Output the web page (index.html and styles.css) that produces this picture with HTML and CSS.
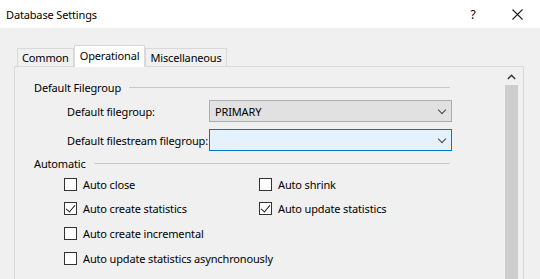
FILE: index.html
```html
<!DOCTYPE html>
<html lang="en">
<head>
  <meta charset="UTF-8" />
  <title>Database Settings</title>
  <link rel="stylesheet" href="styles.css">
</head>
<body>
  <div class="window">
    <div class="titlebar">
      <span class="title">Database Settings</span>
      <span class="help">?</span>
      <span class="close">
        <svg width="11" height="11" viewBox="0 0 11 11"><path d="M0.5 0.5 L10.5 10.5 M10.5 0.5 L0.5 10.5" stroke="#222" stroke-width="1.1" fill="none"/></svg>
      </span>
    </div>

    <div class="tabs">
      <div class="tab">Common</div>
      <div class="tab active">Operational</div>
      <div class="tab">Miscellaneous</div>
    </div>

    <div class="panel">
      <div class="content">
        <div class="group-head"><span>Default Filegroup</span><i class="rule"></i></div>
        <div class="field-grid">
          <label>Default filegroup:</label>
          <div class="combo">PRIMARY<span class="chev"></span></div>
          <label>Default filestream filegroup:</label>
          <div class="combo focused"><span class="chev"></span></div>
        </div>

        <div class="group-head"><span>Automatic</span><i class="rule"></i></div>
        <div class="check-grid">
          <div class="check"><span class="box"></span>Auto close</div>
          <div class="check"><span class="box"></span>Auto shrink</div>
          <div class="check"><span class="box checked"></span>Auto create statistics</div>
          <div class="check"><span class="box checked"></span>Auto update statistics</div>
          <div class="check"><span class="box"></span>Auto create incremental</div>
          <div class="check"></div>
          <div class="check wide"><span class="box"></span>Auto update statistics asynchronously</div>
        </div>

        <div class="group-head"><span>Cursor</span><i class="rule"></i></div>
      </div>
      <div class="scrollbar">
        <div class="arrow">
          <svg width="9" height="6" viewBox="0 0 9 6"><path d="M0.8 5 L4.5 1.3 L8.2 5" stroke="#333" stroke-width="1.4" fill="none"/></svg>
        </div>
        <div class="thumb"></div>
      </div>
    </div>
  </div>
</body>
</html>
```

FILE: styles.css
```css
* {
  margin: 0;
  padding: 0;
  box-sizing: border-box;
}
body {
  font-family: "Noto Sans", "Open Sans", sans-serif;
  font-size: 11px;
  letter-spacing: -0.15px;
  color: #000;
  background: #f0f0f0;
  overflow: hidden;
}
.window {
  width: 540px;
  height: 279px;
  overflow: hidden;
}
.titlebar {
  height: 28px;
  background: #fff;
  display: flex;
  align-items: center;
  padding-left: 6px;
}
.title {
  flex: 1;
}
.help {
  width: 42px;
  text-align: center;
  font-size: 12px;
}
.close {
  width: 46px;
  display: flex;
  justify-content: center;
}
.tabs {
  display: flex;
  align-items: flex-end;
  height: 38px;
  padding-left: 17px;
}
.tab {
  height: 18px;
  padding: 0 4px;
  border: 1px solid #d9d9d9;
  border-bottom: none;
  background: #f0f0f0;
  line-height: 18px;
}
.tab.active {
  height: 22px;
  background: #fff;
  margin-bottom: -1px;
  line-height: 19px;
  padding: 0 5px;
  position: relative;
  z-index: 1;
}
.panel {
  display: flex;
  margin-left: 14px;
  width: 510px;
  height: 220px;
  border: 1px solid #d9d9d9;
  padding: 1px 3px 0 0;
}
.content {
  flex: 1;
  padding: 11px 0 0 19px;
}
.group-head {
  display: flex;
  align-items: center;
  height: 16px;
  margin-right: 53px;
}
.rule {
  flex: 1;
  height: 1px;
  background: #c8c8c8;
  margin-left: 8px;
}
.field-grid {
  display: grid;
  grid-template-columns: 142px 243px;
  grid-auto-rows: 22px;
  row-gap: 7px;
  align-items: center;
  margin: 5px 0 4px 33px;
  white-space: nowrap;
}
.combo {
  height: 22px;
  border: 1px solid #adadad;
  background: #e1e1e1;
  display: flex;
  align-items: center;
  padding-left: 5px;
  position: relative;
}
.combo.focused {
  border-color: #0078d7;
  background: #e5f1fb;
}
.chev {
  position: absolute;
  right: 6px;
  top: 6px;
  width: 6px;
  height: 6px;
  border-right: 1px solid #444;
  border-bottom: 1px solid #444;
  transform: rotate(45deg);
}
.check-grid {
  display: grid;
  grid-template-columns: 195px auto;
  grid-auto-rows: 24.6px;
  margin: 1px 0 4px 30px;
}
.check {
  display: flex;
  align-items: center;
  white-space: nowrap;
}
.check.wide {
  grid-column: span 2;
}
.box {
  width: 13px;
  height: 13px;
  border: 1px solid #333;
  background: #fff;
  margin-right: 6px;
  position: relative;
}
.box.checked::after {
  content: "";
  position: absolute;
  left: 3px;
  top: 0px;
  width: 4px;
  height: 8px;
  border-right: 1px solid #222;
  border-bottom: 1px solid #222;
  transform: rotate(40deg);
}
.scrollbar {
  width: 17px;
  background: #f0f0f0;
  display: flex;
  flex-direction: column;
  align-items: center;
}
.arrow {
  height: 17px;
  display: flex;
  align-items: center;
  justify-content: center;
}
.thumb {
  width: 13px;
  flex: 1;
  background: #cdcdcd;
}
```
